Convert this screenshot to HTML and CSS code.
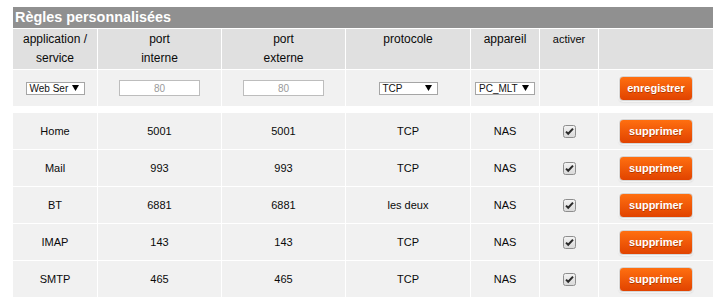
FILE: index.html
```html
<!DOCTYPE html>
<html lang="fr">
<head>
  <meta charset="UTF-8" />
  <title>Règles personnalisées</title>
  <link rel="stylesheet" href="styles.css">
</head>
<body>

  <div class="panel">
    <div class="panel-title">Règles personnalisées</div>

    <table class="rules">
      <colgroup>
        <col class="c-app">
        <col class="c-port">
        <col class="c-port">
        <col class="c-proto">
        <col class="c-dev">
        <col class="c-on">
        <col class="c-act">
      </colgroup>
      <thead>
        <tr>
          <th>application /<br>service</th>
          <th>port<br>interne</th>
          <th>port<br>externe</th>
          <th>protocole</th>
          <th>appareil</th>
          <th class="small">activer</th>
          <th></th>
        </tr>
      </thead>
      <tbody>
        <!-- ligne d'ajout -->
        <tr class="edit-row">
          <td>
            <span class="select sel-app"><span class="select-value">Web Ser</span><span class="select-arrow"><svg width="7" height="6" viewBox="0 0 7 6"><path d="M0 0H7L3.5 6Z" fill="#000"/></svg></span></span>
          </td>
          <td><input class="port-input" type="text" placeholder="80"></td>
          <td><input class="port-input" type="text" placeholder="80"></td>
          <td>
            <span class="select sel-proto"><span class="select-value">TCP</span><span class="select-arrow"><svg width="7" height="6" viewBox="0 0 7 6"><path d="M0 0H7L3.5 6Z" fill="#000"/></svg></span></span>
          </td>
          <td>
            <span class="select sel-dev"><span class="select-value">PC_MLT</span><span class="select-arrow"><svg width="7" height="6" viewBox="0 0 7 6"><path d="M0 0H7L3.5 6Z" fill="#000"/></svg></span></span>
          </td>
          <td></td>
          <td><button class="btn">enregistrer</button></td>
        </tr>
        <tr class="spacer"><td colspan="7"></td></tr>
      </tbody>
      <tbody id="ruleRows"></tbody>
    </table>
  </div>

  <script>
    // liste des règles existantes
    const rules = [
      { name: "Home", inPort: 5001, outPort: 5001, proto: "TCP", dev: "NAS" },
      { name: "Mail", inPort: 993, outPort: 993, proto: "TCP", dev: "NAS" },
      { name: "BT", inPort: 6881, outPort: 6881, proto: "les deux", dev: "NAS" },
      { name: "IMAP", inPort: 143, outPort: 143, proto: "TCP", dev: "NAS" },
      { name: "SMTP", inPort: 465, outPort: 465, proto: "TCP", dev: "NAS" }
    ];

    const checkSvg =
      '<svg class="check" width="13" height="13" viewBox="0 0 13 13">' +
      '<defs><linearGradient id="cbg" x1="0" y1="0" x2="0" y2="1">' +
      '<stop offset="0" stop-color="#f4f4f4"/><stop offset="1" stop-color="#d8d8d8"/></linearGradient></defs>' +
      '<rect x="0.5" y="0.5" width="12" height="12" rx="2" fill="url(#cbg)" stroke="#8e8e8e"/>' +
      '<path d="M3 6.6L5.2 8.8L10 3.6" fill="none" stroke="#2a2a2a" stroke-width="2"/>' +
      '</svg>';

    const body = document.getElementById("ruleRows");
    rules.forEach(r => {
      const tr = document.createElement("tr");
      tr.className = "rule-row";
      tr.innerHTML =
        "<td>" + r.name + "</td>" +
        "<td>" + r.inPort + "</td>" +
        "<td>" + r.outPort + "</td>" +
        "<td>" + r.proto + "</td>" +
        "<td>" + r.dev + "</td>" +
        "<td>" + checkSvg + "</td>" +
        '<td><button class="btn">supprimer</button></td>';
      body.appendChild(tr);
    });
  </script>
</body>
</html>
```

FILE: styles.css
```css
/* ======= base ======= */
* {
  box-sizing: border-box;
  margin: 0;
  padding: 0;
}
body {
  font-family: "Liberation Sans", Arial, sans-serif;
  background: #fff;
  color: #0a0a0a;
  padding: 7px 6px 0 13px;
}

/* ======= panneau ======= */
.panel {
  width: 700px;
}
.panel-title {
  height: 21px;
  line-height: 21px;
  margin-bottom: 1px;
  padding-left: 2px;
  background: #909090;
  color: #fff;
  font-size: 14.4px;
  font-weight: bold;
}

/* ======= tableau ======= */
.rules {
  width: 700px;
  table-layout: fixed;
  border-collapse: separate;
  border-spacing: 0;
}
.c-app { width: 85px; }
.c-port { width: 124px; }
.c-proto { width: 125px; }
.c-dev { width: 69px; }
.c-on { width: 59px; }
.c-act { width: 114px; }

.rules th,
.rules td {
  text-align: center;
  border-right: 1px solid #fff;
  border-bottom: 1px solid #fff;
}
.rules th:last-child,
.rules td:last-child {
  border-right: none;
}
.rules th {
  height: 41px;
  padding: 1px 0;
  vertical-align: top;
  background: #e0e0e0;
  font-size: 12px;
  font-weight: normal;
  line-height: 19px;
}
.rules th.small {
  font-size: 11px;
}
.rules td {
  height: 37px;
  vertical-align: middle;
  font-size: 11px;
  background: #f1f1f1;
}
.edit-row td {
  height: 36px;
  border-bottom: none;
}
.spacer td {
  height: 7px;
  background: #fff;
  border-right: none;
}

/* ======= champs ======= */
.select {
  display: inline-flex;
  align-items: center;
  justify-content: space-between;
  height: 13px;
  padding: 0 5px 0 3px;
  vertical-align: middle;
  background: #fff;
  border: 1px solid #a5a5a5;
  font-size: 10px;
  line-height: 11px;
  text-align: left;
  color: #111;
}
.select-value {
  white-space: nowrap;
}
.select-arrow {
  display: flex;
}
.sel-app { width: 59px; }
.sel-proto { width: 59px; }
.sel-dev { width: 60px; }

.port-input {
  width: 81px;
  height: 16px;
  vertical-align: middle;
  border: 1px solid #bdbdbd;
  background: #fff;
  font-family: inherit;
  font-size: 10px;
  text-align: center;
}
.port-input::placeholder {
  color: #9a9a9a;
}

.check {
  display: inline-block;
  vertical-align: middle;
}

/* ======= boutons ======= */
.btn {
  width: 74px;
  height: 25px;
  vertical-align: middle;
  border: 1px solid #d6d6d6;
  border-radius: 4px;
  background: linear-gradient(#ff6f10, #e14300);
  box-shadow: 0 0 0 1px #f4f4f4, 0 1px 2px rgba(0,0,0,0.15);
  color: #fff;
  font-family: inherit;
  font-size: 11px;
  font-weight: bold;
  text-shadow: 0 1px 0 rgba(120,30,0,0.5);
  cursor: pointer;
}
.btn:hover {
  background: linear-gradient(#ff7d20, #e94d00);
}
```
